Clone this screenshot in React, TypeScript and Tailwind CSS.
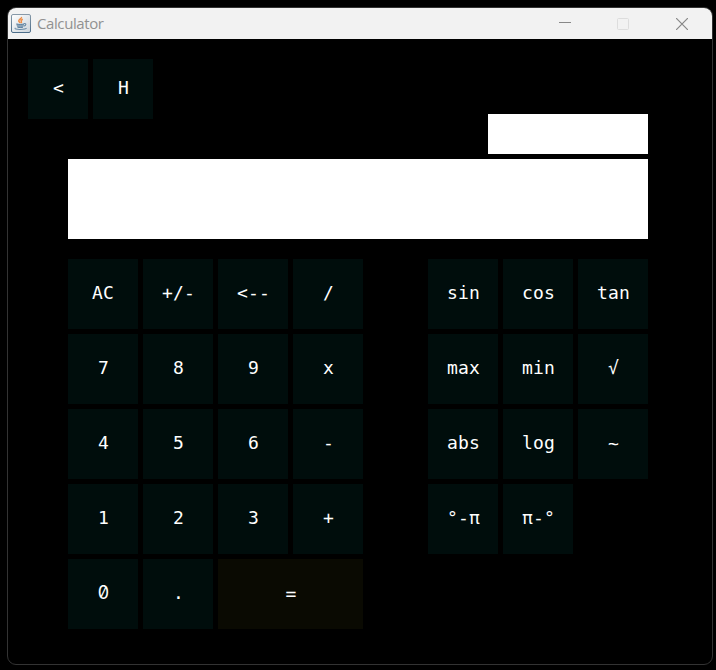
import React from "react";

const keypad = ["AC", "+/-", "<--", "/", "7", "8", "9", "x", "4", "5", "6", "-", "1", "2", "3", "+", "0", ".", "="];
const functions = ["sin", "cos", "tan", "max", "min", "√", "abs", "log", "~", "°-π", "π-°"];

function Key({ label, small = false }: { label: string; small?: boolean }) {
  const size = small ? "h-[60px] w-[60px]" : label === "=" ? "col-span-2 h-[70px]" : "h-[70px]";
  const color = label === "=" ? "bg-[#0a0a02]" : "bg-[#000d0c]";
  const font =
    label === "0"
      ? "font-['Inter',sans-serif] slashed-zero"
      : "font-['DejaVu_Sans_Mono',monospace] tracking-[0.16px]";
  const lift = label === "=" || label === "~" ? "pb-px" : "pb-[3px]";
  const nudge = label === "AC" ? "pl-0" : "pl-px";
  return (
    <button
      className={`${size} ${color} ${font} ${lift} ${nudge} flex items-center justify-center whitespace-pre text-[18px] leading-none text-white`}
    >
      {label}
    </button>
  );
}

function JavaIcon() {
  return (
    <svg width="20" height="19" viewBox="0 0 20 19" fill="none">
      <defs>
        <linearGradient id="tile" x1="0" y1="0" x2="1" y2="1">
          <stop offset="0" stopColor="#ffffff" />
          <stop offset="1" stopColor="#cbd3da" />
        </linearGradient>
        <linearGradient id="edge" x1="0" y1="0" x2="0" y2="1">
          <stop offset="0" stopColor="#8799a8" />
          <stop offset="1" stopColor="#4c6d89" />
        </linearGradient>
      </defs>
      <rect x="0.5" y="0.5" width="19" height="18" rx="1.5" fill="url(#tile)" stroke="url(#edge)" />
      <path d="M10.4 3c1 1.400-2.800 2.300-2.600 3.900 0 .9 1.400 1.300 1.200 2.300M11.800 5.200c-1.700.7-2.100 1.300-1.500 2.200.4.6.3 1-.3 1.500" stroke="#ee8b42" strokeWidth="1.5" />
      <path d="M5.300 9.800c1.800.7 6.200.7 7.800 0-.1 1.600-.6 2.800-1.600 3.700-1.200.4-3.400.4-4.600 0-1-.9-1.500-2.100-1.600-3.700Z" fill="#8ba3b7" />
      <path d="M5.500 9.900c1.800.7 5.900.7 7.500 0M6.500 13.200c1.500.5 4 .5 5.500 0" stroke="#597f9f" />
      <path d="M13 9.600c2.600-.6 2.500 1.800-.4 2.600M4.500 14c-1.500.8 1 1.600 5 1.500 3.500 0 5.500-.5 6-1.400" stroke="#6c8da8" strokeWidth="1.1" />
    </svg>
  );
}

export default function App() {
  return (
    <main className="h-[670px] w-[716px] overflow-hidden bg-black pl-[7px] pt-[7px]">
      <section className="h-[658px] w-[706px] overflow-hidden rounded-[9px] border border-[#333333] bg-black">
        <header className="flex h-[31px] items-center bg-[#f2f2f2] pl-[3px]">
          <JavaIcon />
          <h1 className="ml-[6px] pb-0.5 font-['Open_Sans',sans-serif] text-[15px] font-normal leading-5 tracking-[-0.4px] text-[#919191]">
            Calculator
          </h1>
          <div className="ml-auto flex h-full">
            <button aria-label="Minimize" className="flex w-[58px] items-center justify-center">
              <svg width="12" height="12" viewBox="0 0 12 12"><path d="M0 4.500h12" stroke="#888888" /></svg>
            </button>
            <button aria-label="Maximize" className="flex w-[58px] items-center justify-center">
              <svg width="12" height="12" viewBox="0 0 12 12"><rect x=".5" y=".5" width="11" height="11" rx="1" fill="none" stroke="#dddddd" /></svg>
            </button>
            <button aria-label="Close" className="flex w-[60px] items-center justify-center">
              <svg width="12" height="12" viewBox="0 0 12 12"><path d="m0 0 12 12M12 0 0 12" stroke="#888888" strokeWidth="1.2" /></svg>
            </button>
          </div>
        </header>
        <div className="pl-5 pt-5">
          <nav className="flex h-[55px] gap-[5px]">
            <Key label="<" small />
            <Key label="H" small />
          </nav>
          <div className="ml-10 flex w-[580px] flex-col items-end gap-[5px]">
            <output className="block h-10 w-40 bg-white" />
            <output className="block h-20 w-full bg-white" />
          </div>
          <div className="ml-10 mt-5 flex w-[580px] items-start justify-between">
            <div className="grid w-[295px] grid-cols-4 gap-[5px]">
              {keypad.map((label) => <Key key={label} label={label} />)}
            </div>
            <div className="grid w-[220px] grid-cols-3 gap-[5px]">
              {functions.map((label) => <Key key={label} label={label} />)}
            </div>
          </div>
        </div>
      </section>
    </main>
  );
}
